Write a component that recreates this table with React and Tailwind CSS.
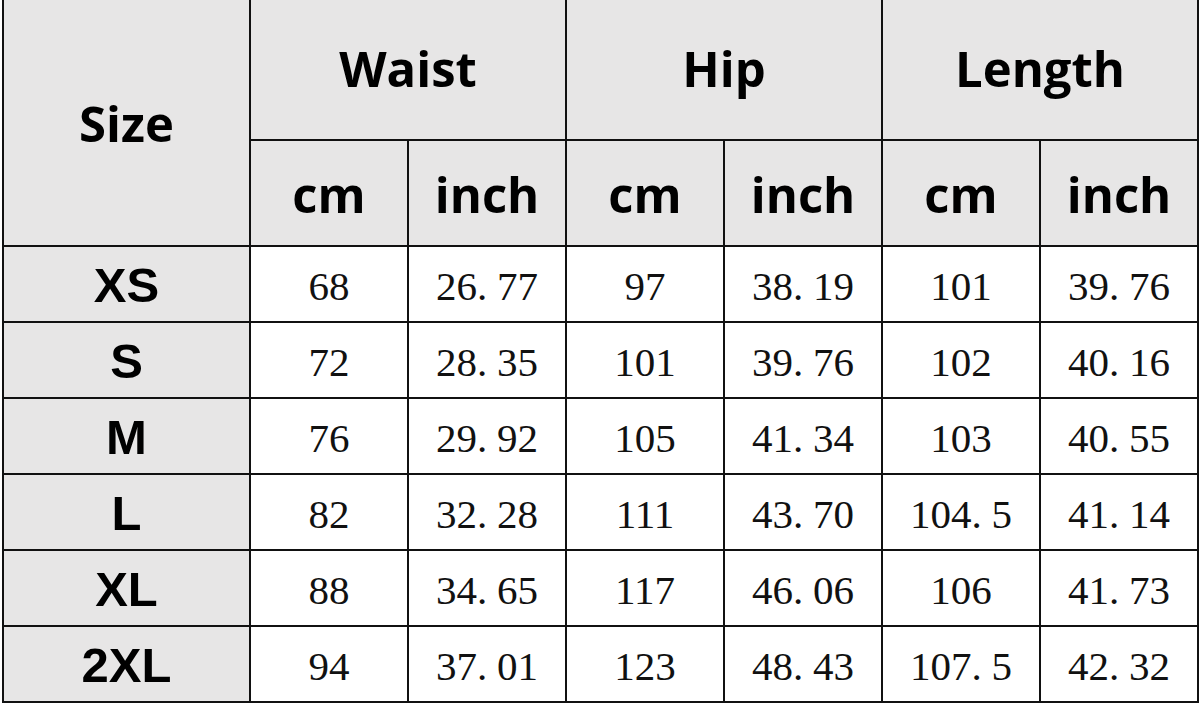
import React from "react";

const rows = [
  ["XS", "68", "26.77", "97", "38.19", "101", "39.76"],
  ["S", "72", "28.35", "101", "39.76", "102", "40.16"],
  ["M", "76", "29.92", "105", "41.34", "103", "40.55"],
  ["L", "82", "32.28", "111", "43.70", "104.5", "41.14"],
  ["XL", "88", "34.65", "117", "46.06", "106", "41.73"],
  ["2XL", "94", "37.01", "123", "48.43", "107.5", "42.32"],
];

function Num({ v }) {
  const i = v.indexOf(".");
  if (i < 0) return <span>{v}</span>;
  return (
    <span>
      {v.slice(0, i)}
      <span className="inline-block w-[20px] text-left">.</span>
      {v.slice(i + 1)}
    </span>
  );
}

const head = "bg-[#e7e6e6] flex items-center justify-center text-black font-bold text-[49px] leading-none [font-family:'Open_Sans','Noto_Sans',sans-serif]";
const sizeCell = "bg-[#e7e6e6] flex items-center justify-center text-black font-bold text-[49px] leading-none [font-family:'Liberation_Sans',Arial,sans-serif]";
const dataCell = "bg-white flex items-center justify-center pt-[4px] text-[#111] text-[41px] leading-none [font-family:'Liberation_Serif','Times_New_Roman',serif]";

export default function App() {
  return (
    <div className="w-[1200px] h-[705px] bg-white">
      <div className="ml-[2px] inline-grid grid-cols-[245px_repeat(6,156px)] grid-rows-[139px_104px_repeat(6,74px)] gap-[2px] bg-[#111] px-[2px] pb-[2px]">
        <div className={`${head} row-span-2 pt-[2px]`}>Size</div>
        <div className={`${head} col-span-2 pb-[2px]`}>Waist</div>
        <div className={`${head} col-span-2 pb-[2px]`}>Hip</div>
        <div className={`${head} col-span-2 pb-[2px]`}>Length</div>
        {["cm", "inch", "cm", "inch", "cm", "inch"].map((t, i) => (
          <div key={i} className={`${head} pt-[2px]`}>{t}</div>
        ))}
        {rows.map((r) => (
          <React.Fragment key={r[0]}>
            <div className={`${sizeCell} pt-[2px]`}>{r[0]}</div>
            {r.slice(1).map((v, j) => (
              <div key={j} className={dataCell}>
                <Num v={v} />
              </div>
            ))}
          </React.Fragment>
        ))}
      </div>
    </div>
  );
}
